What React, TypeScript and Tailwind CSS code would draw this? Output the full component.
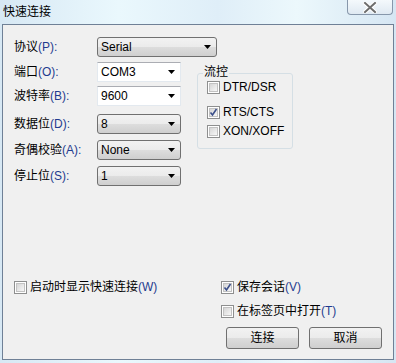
import React from "react";

const blue = "text-[#1f3b8f]";

function Arrow() {
  return (
    <svg width="7" height="4" viewBox="0 0 7 4" className="shrink-0">
      <path d="M0 0h7L3.5 4z" fill="#000" />
    </svg>
  );
}

function Label({ zh, key_ }: { zh: string; key_: string }) {
  return (
    <span className="text-black">
      {zh}
      <span className={blue}>({key_}):</span>
    </span>
  );
}

// drop-down list (button-like)
function DropList({ value, wide }: { value: string; wide?: boolean }) {
  return (
    <div
      className={`${wide ? "w-[120px]" : "w-[84px]"} flex h-[20px] items-center justify-between rounded-[3px] border border-[#707070] bg-[linear-gradient(#f2f2f2_0%,#ebebeb_50%,#dddddd_50%,#cfcfcf_100%)] pl-[3px] pr-[5px] text-black`}
    >
      <span>{value}</span>
      <Arrow />
    </div>
  );
}

// editable combo box
function Combo({ value }: { value: string }) {
  return (
    <div className="flex h-[20px] w-[84px] items-center justify-between border border-[#e3e9ef] border-t-[#abadb3] bg-white pl-[3px] pr-[5px] text-black">
      <span>{value}</span>
      <Arrow />
    </div>
  );
}

function Check({ checked }: { checked?: boolean }) {
  return (
    <div className="relative h-[13px] w-[13px] shrink-0 border border-[#8e8f8f] bg-white p-[1px]">
      <div className="h-full w-full border border-[#c2c2c2] bg-[linear-gradient(135deg,#d6d6d6,#f7f7f7)]" />
      {checked && (
        <svg width="9" height="9" viewBox="0 0 9 9" className="absolute left-[1px] top-[1px]">
          <path d="M1.5 4.5l2 2.5L7.5 1" fill="none" stroke="#3b4f8a" strokeWidth="1.6" />
        </svg>
      )}
    </div>
  );
}

function CheckRow({ checked, children }: { checked?: boolean; children: React.ReactNode }) {
  return (
    <div className="flex h-[16px] items-center gap-[3px] text-black">
      <Check checked={checked} />
      <span>{children}</span>
    </div>
  );
}

function Button({ text }: { text: string }) {
  return (
    <div className="flex h-[22px] w-[73px] items-center justify-center rounded-[3px] border border-[#707070] bg-[linear-gradient(#f2f2f2_0%,#ebebeb_50%,#dddddd_50%,#cfcfcf_100%)] text-black">
      {text}
    </div>
  );
}

export default function App() {
  return (
    <div className="flex h-[363px] w-[396px] flex-col overflow-hidden bg-[linear-gradient(90deg,#d7e8f4_0%,#eaf8fd_30%,#dfeef8_55%,#ecf8fc_75%,#d6e6f3_100%)] font-['Liberation_Sans','Noto_Sans_CJK_SC',sans-serif] text-[12px]">
      {/* title bar */}
      <div className="flex h-[24px] shrink-0 items-start justify-between">
        <span className="ml-[3px] mt-[3px] font-['Noto_Sans_CJK_SC',sans-serif] text-[12px] leading-[16px] text-black">
          快速连接
        </span>
        <div className="mr-[3px] flex h-[15px] w-[46px] items-center justify-center rounded-b-[4px] border border-t-0 border-[#8797ab] bg-[linear-gradient(#f4f9fc,#dfe9f2)]">
          <svg width="14" height="11" viewBox="0 0 14 11">
            <path d="M2 1l10 9M12 1L2 10" stroke="#fff" strokeWidth="4" strokeLinecap="square" />
            <path d="M2 1l10 9M12 1L2 10" stroke="#6d6d6d" strokeWidth="2" strokeLinecap="square" />
          </svg>
        </div>
      </div>

      {/* client area */}
      <div className="mx-[2px] mb-[3px] flex flex-1 flex-col border border-[#6f8096] bg-[#f0f0f0] pl-[11px] pr-[11px] pb-[10px]">
        <div className="mt-[12px] flex h-[20px] items-center">
          <div className="w-[83px]">
            <Label zh="协议" key_="P" />
          </div>
          <DropList value="Serial" wide />
        </div>

        <div className="mt-[5px] flex">
          <div className="flex w-[183px] flex-col">
            <div className="flex h-[20px] items-center">
              <div className="w-[83px]">
                <Label zh="端口" key_="O" />
              </div>
              <Combo value="COM3" />
            </div>
            <div className="mt-[4px] flex h-[20px] items-center">
              <div className="w-[83px]">
                <Label zh="波特率" key_="B" />
              </div>
              <Combo value="9600" />
            </div>
            <div className="mt-[8px] flex h-[20px] items-center">
              <div className="w-[83px]">
                <Label zh="数据位" key_="D" />
              </div>
              <DropList value="8" />
            </div>
            <div className="mt-[6px] flex h-[20px] items-center">
              <div className="w-[83px]">
                <Label zh="奇偶校验" key_="A" />
              </div>
              <DropList value="None" />
            </div>
            <div className="mt-[6px] flex h-[20px] items-center">
              <div className="w-[83px]">
                <Label zh="停止位" key_="S" />
              </div>
              <DropList value="1" />
            </div>
          </div>

          {/* flow control group */}
          <div className="relative mt-[11px] flex h-[76px] w-[96px] flex-col rounded-[3px] border border-[#d5dfe5] pl-[9px] pt-[5px]">
            <span className="absolute -top-[10px] left-[5px] bg-[#f0f0f0] px-[1px] leading-[16px] text-black">
              流控
            </span>
            <CheckRow>DTR/DSR</CheckRow>
            <div className="mt-[9px]">
              <CheckRow checked>RTS/CTS</CheckRow>
            </div>
            <div className="mt-[3px]">
              <CheckRow>XON/XOFF</CheckRow>
            </div>
          </div>
        </div>

        {/* bottom */}
        <div className="mt-auto flex">
          <div className="w-[207px]">
            <CheckRow>
              启动时显示快速连接<span className={blue}>(W)</span>
            </CheckRow>
          </div>
          <div className="flex flex-col">
            <CheckRow checked>
              保存会话<span className={blue}>(V)</span>
            </CheckRow>
            <div className="mt-[8px]">
              <CheckRow>
                在标签页中打开<span className={blue}>(T)</span>
              </CheckRow>
            </div>
            <div className="ml-[5px] mt-[8px] flex gap-[10px]">
              <Button text="连接" />
              <Button text="取消" />
            </div>
          </div>
        </div>
      </div>
    </div>
  );
}
